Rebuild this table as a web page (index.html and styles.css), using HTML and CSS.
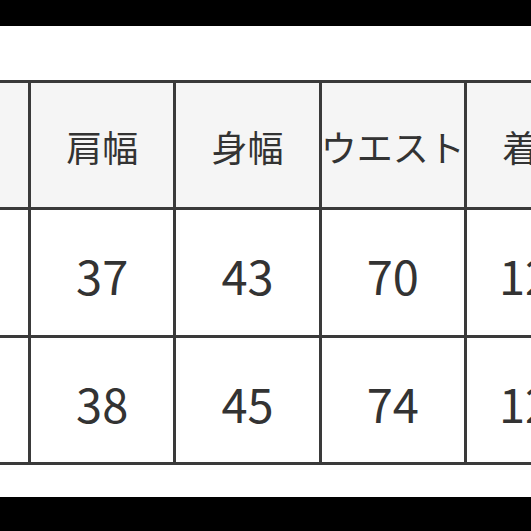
FILE: index.html
```html
<!DOCTYPE html>
<html lang="ja">
<head>
<meta charset="utf-8">
<link rel="stylesheet" href="styles.css">
</head>
<body>
<div class="bar bar-top"></div>
<div class="frame">
  <div class="size-table">
    <div class="cell head"></div>
    <div class="cell head">肩幅</div>
    <div class="cell head">身幅</div>
    <div class="cell head">ウエスト</div>
    <div class="cell head">着丈</div>
    <div class="cell head">袖丈</div>

    <div class="cell num"></div>
    <div class="cell num">37</div>
    <div class="cell num">43</div>
    <div class="cell num">70</div>
    <div class="cell num">125</div>
    <div class="cell num">58</div>

    <div class="cell num"></div>
    <div class="cell num">38</div>
    <div class="cell num">45</div>
    <div class="cell num">74</div>
    <div class="cell num">127</div>
    <div class="cell num">59</div>
  </div>
</div>
<div class="bar bar-bottom"></div>
</body>
</html>
```

FILE: styles.css
```css
html, body {
  margin: 0;
  padding: 0;
  background: #ffffff;
  width: 531px;
  height: 531px;
  overflow: hidden;
}

body {
  display: flex;
  flex-direction: column;
  font-family: "Noto Sans CJK JP", "Noto Sans", sans-serif;
  font-weight: 400;
  color: #333333;
}

.bar {
  background: #000000;
  flex: none;
}

.bar-top {
  height: 26px;
}

.bar-bottom {
  height: 34px;
  margin-top: auto;
}

.frame {
  margin-top: 54px;
  width: 531px;
  overflow: hidden;
  flex: none;
}

.size-table {
  display: grid;
  grid-template-columns: repeat(6, 142.33px);
  grid-template-rows: 124px 125px 124px;
  gap: 3px;
  padding: 3px 0;
  margin-left: -114.33px;
  width: max-content;
  background: #3a3a3a;
}

.cell {
  display: flex;
  align-items: center;
  justify-content: center;
  white-space: nowrap;
  background: #ffffff;
  line-height: 1;
}

.head {
  background: #f5f5f5;
  font-size: 36px;
  padding-top: 2px;
}

.num {
  font-size: 47px;
  padding-top: 4px;
}
```
